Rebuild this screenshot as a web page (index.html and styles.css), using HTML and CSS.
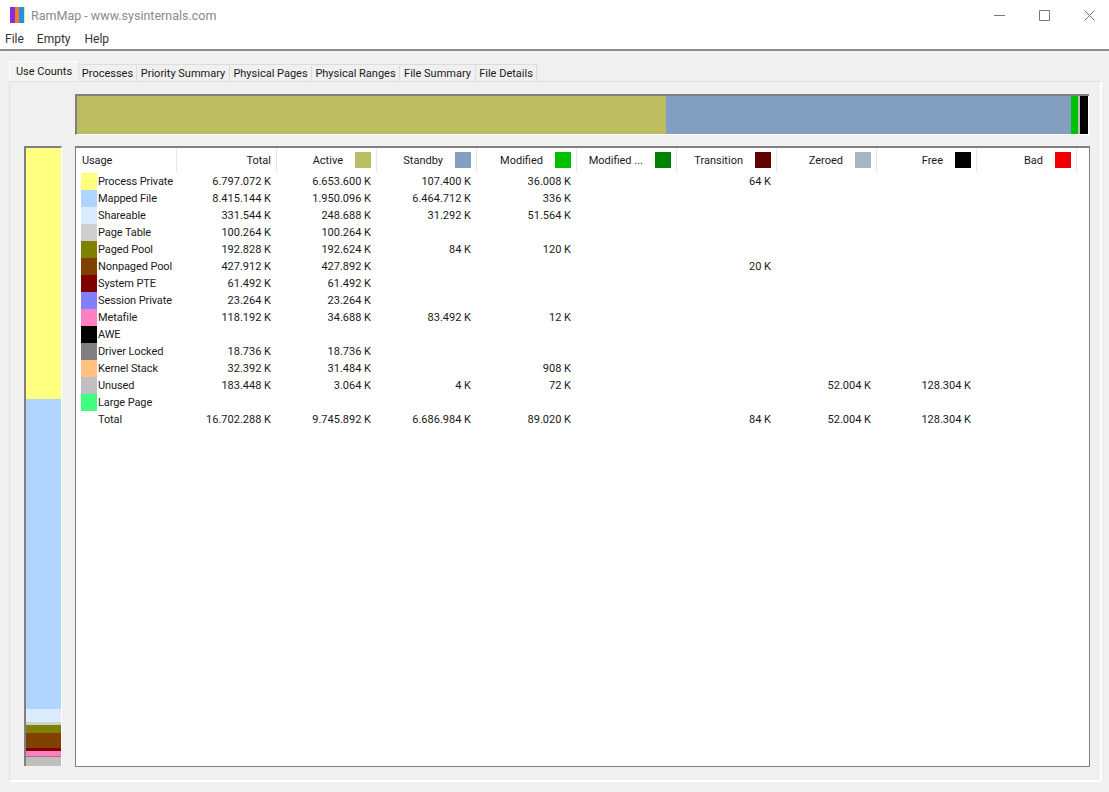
FILE: index.html
```html
<!DOCTYPE html>
<html lang="en">
<head>
<meta charset="utf-8">
<title>RamMap - www.sysinternals.com</title>
<link rel="stylesheet" href="styles.css">
</head>
<body>
<header class="titlebar">
  <svg class="app-icon" width="15" height="16" viewBox="0 0 15 16"><rect width="5" height="16" fill="#8a2be2"/><rect x="5" width="4" height="16" fill="#f47b20"/><rect x="9" width="5" height="16" fill="#1e90e8"/><rect x="14" width="1" height="16" fill="#f5e27a"/></svg>
  <span class="title">RamMap - www.sysinternals.com</span>
  <div class="controls">
    <svg width="11" height="11" viewBox="0 0 11 11"><path d="M0 5.5h11" stroke="#777" fill="none"/></svg>
    <svg width="11" height="11" viewBox="0 0 11 11"><path d="M.5.5h10v10H.5z" stroke="#777" fill="none"/></svg>
    <svg width="11" height="11" viewBox="0 0 11 11"><path d="M.5.5l10 10M10.5.5l-10 10" stroke="#777" fill="none"/></svg>
  </div>
</header>
<nav class="menubar"><span>File</span><span>Empty</span><span class="help">Help</span></nav>
<main class="content">
  <div class="tabs">
    <div class="tab active">Use Counts</div>
    <div class="tab w58">Processes</div>
    <div class="tab w93">Priority Summary</div>
    <div class="tab w82">Physical Pages</div>
    <div class="tab w88">Physical Ranges</div>
    <div class="tab w75">File Summary</div>
    <div class="tab w62">File Details</div>
  </div>
  <section class="panel">
    <div class="hbar">
      <i class="s-active"></i><i class="s-standby"></i><i class="s-gap1"></i><i class="s-mod"></i><i class="s-gap2"></i><i class="s-free"></i>
    </div>
    <div class="vbar">
      <i class="v1"></i><i class="v2"></i><i class="v3"></i><i class="v4"></i><i class="v5"></i><i class="v6"></i><i class="v7"></i><i class="v8"></i><i class="v9"></i><i class="v10"></i>
    </div>
    <div class="table">
      <div class="row head">
        <div class="c first">Usage</div>
        <div class="c">Total</div>
        <div class="c sw"><span class="h">Active</span><b class="k-active"></b></div>
        <div class="c sw"><span class="h">Standby</span><b class="k-standby"></b></div>
        <div class="c sw"><span class="h">Modified</span><b class="k-mod"></b></div>
        <div class="c sw"><span class="h">Modified ...</span><b class="k-modn"></b></div>
        <div class="c sw"><span class="h">Transition</span><b class="k-trans"></b></div>
        <div class="c sw"><span class="h">Zeroed</span><b class="k-zero"></b></div>
        <div class="c sw"><span class="h">Free</span><b class="k-free"></b></div>
        <div class="c sw"><span class="h">Bad</span><b class="k-bad"></b></div>
      </div>
      <div class="row"><div class="c first"><b class="u1"></b>Process Private</div><div class="c">6.797.072 K</div><div class="c">6.653.600 K</div><div class="c">107.400 K</div><div class="c">36.008 K</div><div class="c"></div><div class="c">64 K</div></div>
      <div class="row"><div class="c first"><b class="u2"></b>Mapped File</div><div class="c">8.415.144 K</div><div class="c">1.950.096 K</div><div class="c">6.464.712 K</div><div class="c">336 K</div></div>
      <div class="row"><div class="c first"><b class="u3"></b>Shareable</div><div class="c">331.544 K</div><div class="c">248.688 K</div><div class="c">31.292 K</div><div class="c">51.564 K</div></div>
      <div class="row"><div class="c first"><b class="u4"></b>Page Table</div><div class="c">100.264 K</div><div class="c">100.264 K</div></div>
      <div class="row"><div class="c first"><b class="u5"></b>Paged Pool</div><div class="c">192.828 K</div><div class="c">192.624 K</div><div class="c">84 K</div><div class="c">120 K</div></div>
      <div class="row"><div class="c first"><b class="u6"></b>Nonpaged Pool</div><div class="c">427.912 K</div><div class="c">427.892 K</div><div class="c"></div><div class="c"></div><div class="c"></div><div class="c">20 K</div></div>
      <div class="row"><div class="c first"><b class="u7"></b>System PTE</div><div class="c">61.492 K</div><div class="c">61.492 K</div></div>
      <div class="row"><div class="c first"><b class="u8"></b>Session Private</div><div class="c">23.264 K</div><div class="c">23.264 K</div></div>
      <div class="row"><div class="c first"><b class="u9"></b>Metafile</div><div class="c">118.192 K</div><div class="c">34.688 K</div><div class="c">83.492 K</div><div class="c">12 K</div></div>
      <div class="row"><div class="c first"><b class="u10"></b>AWE</div></div>
      <div class="row"><div class="c first"><b class="u11"></b>Driver Locked</div><div class="c">18.736 K</div><div class="c">18.736 K</div></div>
      <div class="row"><div class="c first"><b class="u12"></b>Kernel Stack</div><div class="c">32.392 K</div><div class="c">31.484 K</div><div class="c"></div><div class="c">908 K</div></div>
      <div class="row"><div class="c first"><b class="u13"></b>Unused</div><div class="c">183.448 K</div><div class="c">3.064 K</div><div class="c">4 K</div><div class="c">72 K</div><div class="c"></div><div class="c"></div><div class="c">52.004 K</div><div class="c">128.304 K</div></div>
      <div class="row"><div class="c first"><b class="u14"></b>Large Page</div></div>
      <div class="row"><div class="c first"><b class="u0"></b>Total</div><div class="c">16.702.288 K</div><div class="c">9.745.892 K</div><div class="c">6.686.984 K</div><div class="c">89.020 K</div><div class="c"></div><div class="c">84 K</div><div class="c">52.004 K</div><div class="c">128.304 K</div></div>
    </div>
  </section>
</main>
</body>
</html>
```
FILE: styles.css
```css
html, body { margin: 0; height: 100%; }
body {
  width: 1109px; height: 792px; overflow: hidden;
  background: #f0f0f0; color: #1a1a1a;
  font: 11px/17px Roboto, "Open Sans", sans-serif;
  display: flex; flex-direction: column;
}
.titlebar { height: 30px; background: #fff; display: flex; align-items: center; padding-left: 10px; }
.app-icon { flex: none; margin-right: 6px; }
.title { color: #8a8a8a; font-size: 12.5px; }
.controls { margin-left: auto; display: flex; gap: 34px; padding-right: 14px; }
.menubar { height: 19px; background: #fff; display: flex; gap: 13px; padding-left: 5px; border-bottom: 2px solid #8c8c8c; font-size: 12px; color: #333; line-height: 18px; }
.help { margin-left: 1px; }
.content { flex: 1; padding: 10px 7px 10px 9px; display: flex; flex-direction: column; }
.tabs { display: flex; align-items: flex-end; height: 20px; }
.tab { height: 17px; box-sizing: border-box; border: 1px solid #dcdcdc; border-bottom: 0; border-left: 0; text-align: center; white-space: nowrap; line-height: 17px; background: #f0f0f0; }
.tab.active { height: 20px; width: 70px; background: #f4f4f4; border: 1px solid #e2e2e2; border-top-color: #fff; border-left-color: #fff; border-bottom: 0; line-height: 20px; }
.w58 { width: 58px; } .w93 { width: 93px; } .w82 { width: 82px; } .w88 { width: 88px; } .w75 { width: 76px; } .w62 { width: 61px; }
.panel {
  flex: 1; box-sizing: border-box; border: 1px solid #e0e0e0; border-right-width: 2px; border-bottom-width: 2px; border-bottom-color: #fff; border-right-color: #fff;
  padding: 12px 0 0 14px;
  display: grid; grid-template-columns: 38px 1015px; grid-template-rows: 41px 621px; column-gap: 13px; row-gap: 11px;
}
.hbar { grid-column: 2; display: flex; box-sizing: border-box; border-top: 2px solid #808080; border-left: 2px solid #808080; border-bottom: 1px solid #fff; width: 1014px; background: #fff; }
.hbar i { display: block; height: 38px; }
.s-active { width: 589px; background: #bcbc60; }
.s-standby { width: 405px; background: #829fc1; }
.s-gap1 { width: 0; }
.s-mod { width: 7px; background: #00c000; }
.s-gap2 { width: 2px; background: #bcbcbc; }
.s-free { width: 8px; background: #000; }
.vbar { grid-column: 1; grid-row: 2; box-sizing: border-box; border-top: 2px solid #808080; border-left: 2px solid #808080; border-right: 1px solid #fff; display: flex; flex-direction: column; background: #bebebe; height: 620px; }
.vbar i { display: block; }
.v1 { height: 251px; background: #ffff80; }
.v2 { height: 310px; background: #b0d4ff; }
.v3 { height: 13px; background: #dcecff; }
.v4 { height: 3px; background: #cfcfcf; }
.v5 { height: 8px; background: #808000; }
.v6 { height: 15px; background: #804000; }
.v7 { height: 3px; background: #800000; }
.v8 { height: 5px; background: #ff80c0; }
.v9 { height: 1px; background: #b07070; }
.v10 { flex: 1; background: #bebebe; }
.table { grid-column: 2; grid-row: 2; box-sizing: border-box; background: #fff; border: 1px solid #808080; border-top-width: 2px; }
.row { display: grid; grid-template-columns: repeat(10, 100px); height: 17px; line-height: 18px; padding-left: 1px; }
.head { height: 24px; margin-bottom: 1px; }
.c { box-sizing: border-box; padding-right: 6px; text-align: right; white-space: nowrap; }
.head .c { border-right: 1px solid #e6e6e6; line-height: 26px; height: 24px; padding-right: 5px; }
.first { text-align: left; padding-left: 4px; padding-right: 0; display: flex; align-items: flex-start; letter-spacing: -0.1px; }
.head .first { padding-left: 5px; }
.first b, .sw b { display: block; flex: none; width: 16px; height: 16px; }
.first b { margin-right: 1px; }
.row:not(.head) .first b { height: 17px; }
.sw { display: flex; justify-content: flex-end; align-items: center; }
.sw b { margin-left: 12px; }
.h { line-height: 26px; height: 24px; }
.k-active { background: #bcbc60; } .k-standby { background: #829fc1; } .k-mod { background: #00c000; } .k-modn { background: #008000; }
.k-trans { background: #600000; } .k-zero { background: #a6b4c4; } .k-free { background: #000; } .k-bad { background: #f00000; }
.u1 { background: #ffff80; } .u2 { background: #b0d4ff; } .u3 { background: #dcecff; } .u4 { background: #cfcfcf; }
.u5 { background: #808000; } .u6 { background: #804000; } .u7 { background: #800000; } .u8 { background: #8080ff; }
.u9 { background: #ff80c0; } .u10 { background: #000; } .u11 { background: #808080; } .u12 { background: #ffc080; }
.u13 { background: #c0c0c0; } .u14 { background: #40ff80; } .u0 { background: transparent; }
```
